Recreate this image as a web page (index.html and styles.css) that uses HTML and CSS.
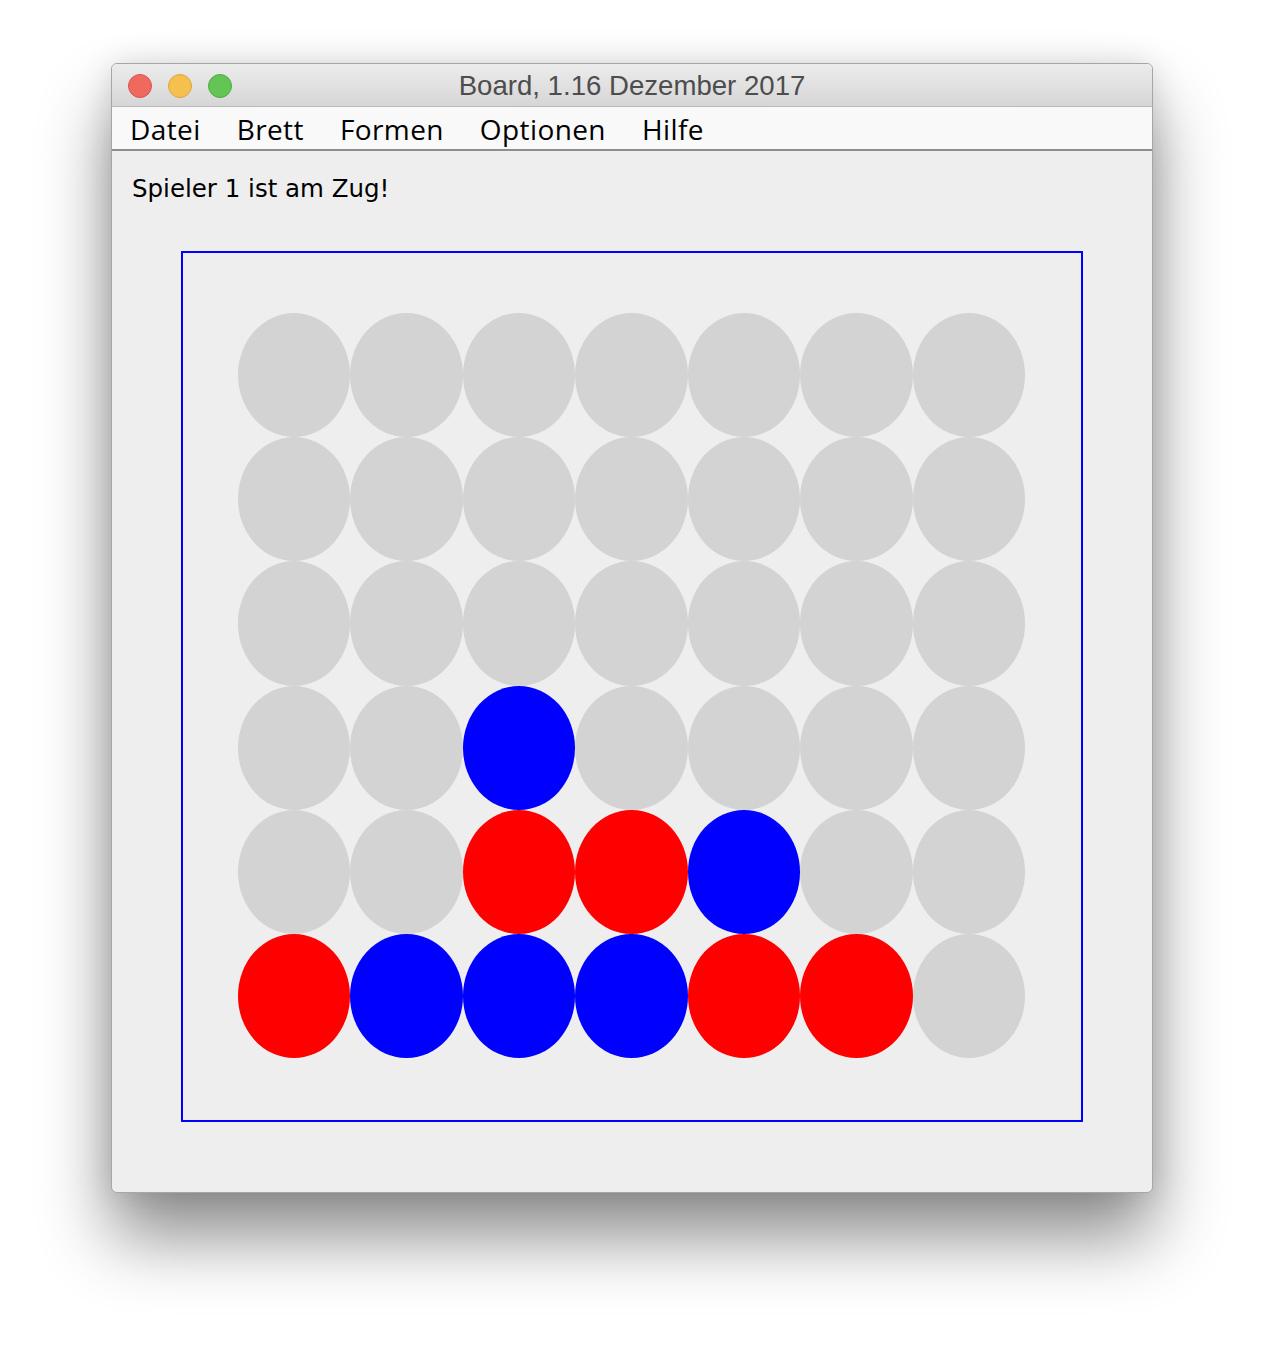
FILE: index.html
```html
<!DOCTYPE html>
<html lang="de">
<head>
<meta charset="utf-8">
<title>Board</title>
<link rel="stylesheet" href="styles.css">
</head>
<body>
<div class="stage">
  <div class="window">
    <div class="titlebar">
      <div class="lights">
        <span class="light red"></span>
        <span class="light yellow"></span>
        <span class="light green"></span>
      </div>
      <div class="title">Board, 1.16 Dezember 2017</div>
      <div></div>
    </div>
    <div class="menubar">
      <span class="menu">Datei</span>
      <span class="menu">Brett</span>
      <span class="menu">Formen</span>
      <span class="menu">Optionen</span>
      <span class="menu">Hilfe</span>
    </div>
    <div class="content">
      <div class="status">Spieler 1 ist am Zug!</div>
      <div class="board">
        <div class="grid">
          <div class="cell"></div><div class="cell"></div><div class="cell"></div><div class="cell"></div><div class="cell"></div><div class="cell"></div><div class="cell"></div>
          <div class="cell"></div><div class="cell"></div><div class="cell"></div><div class="cell"></div><div class="cell"></div><div class="cell"></div><div class="cell"></div>
          <div class="cell"></div><div class="cell"></div><div class="cell"></div><div class="cell"></div><div class="cell"></div><div class="cell"></div><div class="cell"></div>
          <div class="cell"></div><div class="cell"></div><div class="cell blue"></div><div class="cell"></div><div class="cell"></div><div class="cell"></div><div class="cell"></div>
          <div class="cell"></div><div class="cell"></div><div class="cell red"></div><div class="cell red"></div><div class="cell blue"></div><div class="cell"></div><div class="cell"></div>
          <div class="cell red"></div><div class="cell blue"></div><div class="cell blue"></div><div class="cell blue"></div><div class="cell red"></div><div class="cell red"></div><div class="cell"></div>
        </div>
      </div>
    </div>
  </div>
</div>
</body>
</html>
```
FILE: styles.css
```css
html, body {
  margin: 0;
  padding: 0;
  background: #ffffff;
}

.stage {
  padding: 63px 0 0 111px;
  height: 1352px;
  box-sizing: border-box;
  overflow: hidden;
}

.window {
  width: 1042px;
  height: 1130px;
  box-sizing: border-box;
  border: 1px solid #a6a6a6;
  border-radius: 6px;
  overflow: hidden;
  background: #eeeeee;
  box-shadow: 0 44px 70px rgba(0, 0, 0, 0.45), 0 0 30px rgba(0, 0, 0, 0.12);
}

.titlebar {
  height: 43px;
  box-sizing: border-box;
  border-bottom: 1px solid #b9b9b9;
  background: linear-gradient(#ececec, #d6d6d6);
  display: grid;
  grid-template-columns: 1fr auto 1fr;
  align-items: center;
}

.lights {
  display: flex;
  gap: 16px;
  padding-left: 16px;
  padding-top: 1px;
}

.light {
  width: 24px;
  height: 24px;
  box-sizing: border-box;
  border-radius: 50%;
  border: 1px solid;
}

.light.red { background: #ee6a5f; border-color: #d8554b; }
.light.yellow { background: #f6c04f; border-color: #dca643; }
.light.green { background: #62c554; border-color: #50ab43; }

.title {
  font-family: "Liberation Sans", Arial, sans-serif;
  font-size: 27.6px;
  color: #4d4d4d;
  line-height: 40px;
  padding-top: 2px;
  white-space: nowrap;
}

.menubar {
  height: 44px;
  box-sizing: border-box;
  background: #f9f9f9;
  border-bottom: 2px solid #8e8e8e;
  display: flex;
  gap: 36px;
  padding: 3.5px 0 0 18px;
  font-family: "Open Sans", sans-serif;
  font-size: 28px;
  line-height: 37px;
  color: #000000;
}

.menu {
  letter-spacing: 0.4px;
}

.content {
  padding: 23px 0 0 20px;
}

.status {
  font-family: "DejaVu Sans", sans-serif;
  font-size: 24.5px;
  line-height: 30px;
  color: #000000;
}

.board {
  margin: 47px 0 0 49px;
  width: 902px;
  height: 871px;
  box-sizing: border-box;
  border: 2px solid #0000ff;
  padding: 60px 0 0 54.5px;
}

.grid {
  display: grid;
  grid-template-columns: repeat(7, 112.5px);
  grid-template-rows: repeat(6, 124.2px);
}

.cell {
  border-radius: 50%;
  background: #d3d3d3;
}

.cell.red { background: #ff0000; }
.cell.blue { background: #0000ff; }
```
